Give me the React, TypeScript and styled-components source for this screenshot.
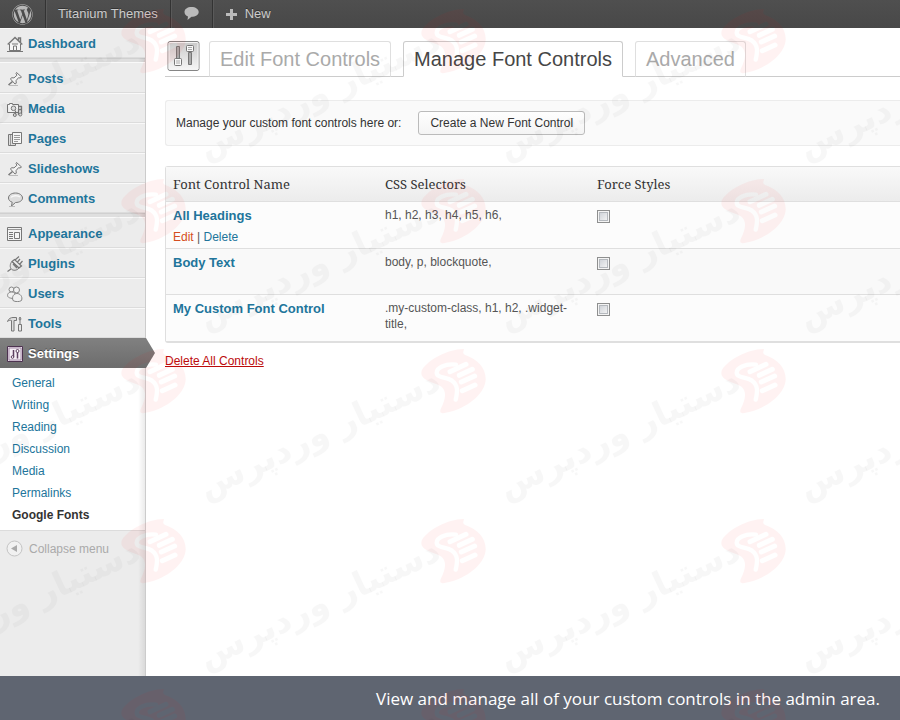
import React from "react";
import styled, { createGlobalStyle, css } from "styled-components";
import { FaWordpress } from "react-icons/fa";

const Global = createGlobalStyle`
  *, *::before, *::after { box-sizing: border-box; }
  body {
    margin: 0;
    background: #fff;
    color: #333;
    font: 12px/16px "Liberation Sans", Arial, sans-serif;
  }
  a { text-decoration: none; color: #21759b; }
`;

const Page = styled.div`
  position: relative;
  display: flex;
  flex-direction: column;
  min-height: 100vh;
  overflow: hidden;
`;

const AdminBar = styled.header`
  display: flex;
  height: 28px;
  flex: none;
  background: linear-gradient(#4f4f4f, #484848);
`;

const BarItem = styled.a<{ $last?: boolean }>`
  display: flex;
  align-items: center;
  gap: 7px;
  padding: 0 12px;
  font-size: 13px;
  color: #ccc;
  text-shadow: 0 -1px 0 #333;
  ${(p) =>
    !p.$last &&
    css`
      border-right: 1px solid #333;
      box-shadow: 1px 0 0 #5a5a5a;
    `}
`;

const Columns = styled.div`
  display: flex;
  flex: 1;
`;

const Sidebar = styled.nav`
  position: relative;
  flex: none;
  width: 146px;
  background: #ececec;
  border-right: 1px solid #ccc;
  &::after {
    content: "";
    position: absolute;
    inset: 0 0 0 auto;
    width: 7px;
    background: linear-gradient(to right, rgba(0, 0, 0, 0), rgba(0, 0, 0, 0.08));
  }
`;

const MenuGroup = styled.div`
  & + & {
    border-top: 1px solid #d0d0d0;
    padding-top: 3px;
    background: #dfdfdf;
  }
`;

const MenuItem = styled.a<{ $current?: boolean }>`
  position: relative;
  z-index: 1;
  display: flex;
  align-items: center;
  gap: 5px;
  height: 30px;
  padding: 2px 0 0 7px;
  font-size: 13px;
  font-weight: bold;
  background: #ececec;
  border-top: 1px solid #f9f9f9;
  border-bottom: 1px solid #dcdcdc;
  ${MenuGroup} + ${MenuGroup} &:first-child {
    height: 31px;
  }
  ${(p) =>
    p.$current &&
    css`
      margin-right: -1px;
      color: #fff;
      text-shadow: 0 -1px 0 #444;
      background: linear-gradient(to top, #6d6d6d, #808080);
      border-color: #808080;
      border-bottom-color: #6d6d6d;
      &::after {
        content: "";
        position: absolute;
        left: 100%;
        top: -1px;
        width: 9px;
        height: 30px;
        background: linear-gradient(to top, #6d6d6d, #808080);
        clip-path: polygon(0 0, 100% 50%, 0 100%);
      }
    `}
`;

const SubMenu = styled.ul`
  list-style: none;
  margin: 0;
  padding: 4px 0 4px;
  background: #fff;
  border-bottom: 1px solid #dcdcdc;
`;

const SubLink = styled.a<{ $current?: boolean }>`
  display: block;
  padding-left: 12px;
  line-height: 22px;
  font-weight: ${(p) => (p.$current ? "bold" : "normal")};
  color: ${(p) => (p.$current ? "#333" : "#21759b")};
`;

const Collapse = styled.button`
  display: flex;
  align-items: center;
  gap: 6px;
  width: 100%;
  height: 35px;
  padding: 0 0 0 6px;
  border: 0;
  background: none;
  font: inherit;
  color: #aaa;
`;

const Main = styled.main`
  flex: 1;
  min-width: 0;
  padding: 12px 0 24px 19px;
`;

const Tabs = styled.div`
  display: flex;
  align-items: flex-end;
  gap: 12px;
  height: 37px;
  border-bottom: 1px solid #ccc;
`;

const ScreenIcon = styled.svg`
  flex: none;
  align-self: flex-start;
  margin: 0 -3px 0 2px;
`;

const Tab = styled.a<{ $active?: boolean }>`
  margin-bottom: -1px;
  height: 36px;
  padding: 0 10px;
  border: 1px solid ${(p) => (p.$active ? "#ccc" : "#dfdfdf")};
  border-bottom-color: ${(p) => (p.$active ? "#fff" : "#ccc")};
  border-radius: 3px 3px 0 0;
  background: #fff;
  color: ${(p) => (p.$active ? "#464646" : "#aaa")};
  font-size: 20px;
  line-height: 34px;
  white-space: nowrap;
`;

const Notice = styled.section`
  display: flex;
  align-items: center;
  gap: 17px;
  height: 46px;
  margin: 23px 0 20px;
  padding-left: 10px;
  border: 1px solid #ececec;
  border-right: 0;
  border-radius: 3px 0 0 3px;
  background: #fafafa;
`;

const Button = styled.button`
  height: 24px;
  padding: 0 11px;
  border: 1px solid #bbb;
  border-radius: 3px;
  background: linear-gradient(#fefefe, #f4f4f4);
  font: inherit;
  color: #333;
`;

const Table = styled.table`
  width: 100%;
  table-layout: fixed;
  border-collapse: separate;
  border-spacing: 0;
  border: 1px solid #dfdfdf;
  border-right: 0;
  border-bottom-width: 2px;
  border-radius: 3px 0 0 3px;
`;

const Head = styled.th`
  height: 35px;
  padding: 0 7px;
  background: linear-gradient(#f9f9f9, #ececec);
  border-bottom: 1px solid #dfdfdf;
  font: 13px/18px "Noto Serif", Georgia, "Liberation Serif", serif;
  text-align: left;
  color: #333;
  &:first-child,
  &:nth-child(2) {
    width: 212px;
  }
`;

const Row = styled.tr`
  background: #fcfcfc;
  &:nth-child(even) {
    background: #f9f9f9;
  }
  &:not(:last-child) td {
    border-bottom: 1px solid #dfdfdf;
  }
`;

const Cell = styled.td`
  height: 46px;
  padding: 5px 7px 3px;
  vertical-align: top;
  color: #555;
`;

const RowTitle = styled.a`
  display: block;
  font-size: 13px;
  line-height: 17px;
  font-weight: bold;
`;

const Actions = styled.div`
  margin-top: 5px;
`;

const EditLink = styled.a`
  color: #d54e21;
`;

const Check = styled.input`
  appearance: none;
  display: block;
  width: 13px;
  height: 13px;
  margin: 3px 0 0;
  border: 1px solid #8e8f8f;
  background: linear-gradient(135deg, #ccd0d6, #f6f6f6) content-box;
  padding: 1px;
  box-shadow: inset 0 0 0 1px #f4f4f4, inset 0 0 0 2px #b5b9be;
`;

const DeleteAll = styled.a`
  display: inline-block;
  margin-top: 10px;
  color: #bc0b0b;
  text-decoration: underline;
`;

const Caption = styled.footer`
  flex: none;
  height: 44px;
  padding-right: 20px;
  background: #5f6571;
  color: #fff;
  font: 17px/46px "Open Sans", "Noto Sans", sans-serif;
  text-align: right;
  white-space: nowrap;
`;

const Overlay = styled.svg`
  position: absolute;
  inset: 0;
  z-index: 5;
  width: 100%;
  height: 100%;
  pointer-events: none;
`;

const line = { fill: "none", stroke: "#777", strokeWidth: 1 } as const;

const glyphs: Record<string, React.ReactNode> = {
  Dashboard: (
    <g {...line}>
      <path d="M2.5 8v6.5h11V8" fill="#f6f6f6" />
      <path d="M.7 8.5 8 1.5l7.3 7M11.500 4.500V2h2v4.500" strokeWidth="1.4" />
      <path d="M6.500 14.500V10h3v4.500M5 8h6M0 15.500h16" />
    </g>
  ),
  Posts: (
    <g {...line}>
      <path d="m9.500 1.500 5 4.500-1.500 1-1.500-.3-2.500 3 .3 2.500-1.300.8L3.500 8l1-1.300 2.500.2 3-2.700-1-1.500z" fill="#f4f4f4" />
      <path d="M5.500 10.500 1.500 14" strokeWidth="1.500" />
      <path d="M2 14.500h9" stroke="#bbb" />
    </g>
  ),
  Media: (
    <g {...line}>
      <path d="M.5 3.500h2v-1h3v1h6v8H.5z" fill="#f4f4f4" />
      <circle cx="6.500" cy="7.300" r="2.300" fill="#ddd" />
      <path d="M8.500 14V9.500M14.500 13V5.500h-2.500M11.500 14V8.500h3" strokeWidth="1.300" />
      <circle cx="7.800" cy="14" r="1.500" fill="#ddd" />
      <circle cx="13.300" cy="13.500" r="1.500" fill="#ddd" />
    </g>
  ),
  Pages: (
    <g {...line}>
      <path d="M5 3.500H1.500v11h7V13" fill="#ddd" />
      <path d="M5.500 1.500h9v11h-9z" fill="#f6f6f6" />
      <path d="M7 4.500h6M7 6.500h6M7 8.500h6M7 10.500h4M3.500 4v10" stroke="#999" />
    </g>
  ),
  Comments: (
    <g {...line}>
      <path d="M8.500 2C4.500 2 1.500 4 1.500 7c0 2 1.500 3.500 3.700 4.200L4.500 15l4-3.500c4 0 7-1.800 7-4.500S12.500 2 8.500 2z" fill="#dedede" />
      <path d="M4 6.500c1-2 7-2.500 9-.5" stroke="#f8f8f8" strokeWidth="1.500" />
      <path d="M2 15.500h6" stroke="#bbb" />
    </g>
  ),
  Appearance: (
    <g {...line}>
      <path d="M.500 1.500h14v13H.5z" fill="#f4f4f4" />
      <path d="M1 3.500h13" stroke="#999" />
      <path d="M2 6.500h4M2 8.500h4M2 10.500h4M2 12.500h4M7.500 6.500h5v6h-5z" />
    </g>
  ),
  Plugins: (
    <g {...line}>
      <path d="M5 5.500 12 12c-2 2.500-5.500 3-7.500 1.200S3 7.500 5 5.500z" fill="#e4e4e4" />
      <path d="m5 5.500 2.500-2 7 6.500L12 12zM8 4l4-3.500M12.500 8.500l3-3.500M10.500 6l2.500-3M4 13l-3.500 2.500M6 8l4 4" strokeWidth="1.200" />
    </g>
  ),
  Users: (
    <g stroke="#858585" fill="#f0f0f0">
      <circle cx="4.500" cy="3.500" r="2.500" />
      <path d="M.8 10.500c-1-3 1.500-4.500 4-4.500s4 1.500 4 4.500-7 2-8 0z" />
      <circle cx="9.500" cy="4" r="3" />
      <path d="M6 14.500c-1.500-4 1-7 4-7s6 3 4.500 7c-2 1.500-6.500 1.500-8.500 0z" />
    </g>
  ),
  Tools: (
    <g {...line}>
      <path d="M.500 5.500C1.500 2.500 4 1.500 6 1.500h3.500v3H7V15H4.500V4.500C3 4 1.500 4.500.5 5.500z" fill="#ddd" />
      <path d="M11.500 8.500h3V15h-3zM13 8V4.500L12 3l1-2 1 2-1 1.500" fill="#e8e8e8" />
    </g>
  ),
  Settings: (
    <g>
      <path d="M.500.500h15v15H.5z" fill="#e9dcea" stroke="#4d3350" />
      <path d="M2 2h12v12H2z" fill="#f6eff6" stroke="#a58ca8" />
      <path d="M6.500 4v7M10.500 6v6.500" stroke="#5c3f5f" strokeWidth="1.500" />
      <circle cx="5.500" cy="11" r="1.300" fill="#fff" stroke="#5c3f5f" />
      <circle cx="10.500" cy="5" r="1.500" fill="#fff" stroke="#5c3f5f" />
    </g>
  ),
};
glyphs.Slideshows = glyphs.Posts;

const MenuIcon = ({ name }: { name: string }) => (
  <svg width="16" height="16" viewBox="0 0 16 16" aria-hidden="true">
    {glyphs[name]}
  </svg>
);

const groups = [
  ["Dashboard"],
  ["Posts", "Media", "Pages", "Slideshows", "Comments"],
  ["Appearance", "Plugins", "Users", "Tools", "Settings"],
];
const subLinks = ["General", "Writing", "Reading", "Discussion", "Media", "Permalinks", "Google Fonts"];
const tabs = ["Edit Font Controls", "Manage Font Controls", "Advanced"];
const controls = [
  { name: "All Headings", selectors: "h1, h2, h3, h4, h5, h6,", actions: true },
  { name: "Body Text", selectors: "body, p, blockquote,", actions: false },
  { name: "My Custom Font Control", selectors: ".my-custom-class, h1, h2, .widget-title,", actions: false },
];

const Watermark = () => (
  <Overlay aria-hidden="true">
    <defs>
      <mask id="hand" maskUnits="userSpaceOnUse" x="0" y="0" width="900" height="510">
        <rect width="900" height="510" fill="#fff" />
        <g fill="none" stroke="#000" strokeLinecap="round">
          <path d="M768 74c-34-4-58 10-58 24 0 16 28 12 46 24 20 14 16 36 11 57" strokeWidth="13" />
          <path d="M750 95l48-22M778 106l39-18M784 126l40-18M787 152l38-17" strokeWidth="15" />
        </g>
      </mask>
      <pattern id="mark" x="200" width="300" height="170" patternUnits="userSpaceOnUse">
        <g transform="scale(.33333)">
          <path
            mask="url(#hand)"
            fill="#f00"
            fillOpacity=".05"
            d="M792 27C740 28 684 60 666 90c-10 26 22 34 48 44 34 14 20 50 8 74-5 14 4 14 34 6 54-16 100-56 101-96 0-36-26-60-60-72-12-6-6-12-5-19z"
          />
        </g>
        <text
          x="124"
          y="104"
          transform="rotate(-25 124 104)"
          textAnchor="middle"
          direction="rtl"
          fontFamily="DejaVu Sans, sans-serif"
          fontSize="34"
          fontWeight="bold"
          fill="#000"
          fillOpacity=".03"
        >
          دستیار وردپرس
        </text>
      </pattern>
    </defs>
    <rect width="100%" height="100%" fill="url(#mark)" />
  </Overlay>
);

export default function App() {
  return (
    <Page>
      <Global />
      <AdminBar>
        <BarItem href="#about" aria-label="About WordPress">
          <FaWordpress size={21} color="#b8b8b8" />
        </BarItem>
        <BarItem href="#site">Titanium Themes</BarItem>
        <BarItem href="#comments" aria-label="Comments">
          <svg width="17" height="16" viewBox="0 0 17 16">
            <path d="M8.500 1C4.500 1 1.500 3 1.500 6c0 2 1.300 3.600 3.500 4.400L4.500 14l4-3.200c4 0 7.200-1.900 7.200-4.800S12.500 1 8.500 1z" fill="#bbb" />
          </svg>
        </BarItem>
        <BarItem href="#new" $last>
          <svg width="13" height="13" viewBox="0 0 13 13" aria-hidden="true">
            <path d="M5 1h3v4h4v3H8v4H5V8H1V5h4z" fill="#bbb" />
          </svg>
          New
        </BarItem>
      </AdminBar>
      <Columns>
        <Sidebar>
          {groups.map((items) => (
            <MenuGroup key={items[0]}>
              {items.map((name) => (
                <MenuItem key={name} href={`#${name}`} $current={name === "Settings"}>
                  <MenuIcon name={name} />
                  {name}
                </MenuItem>
              ))}
            </MenuGroup>
          ))}
          <SubMenu>
            {subLinks.map((name) => (
              <li key={name}>
                <SubLink href={`#${name}`} $current={name === "Google Fonts"}>
                  {name}
                </SubLink>
              </li>
            ))}
          </SubMenu>
          <Collapse>
            <svg width="17" height="17" viewBox="0 0 17 17" aria-hidden="true">
              <circle cx="8.500" cy="8.500" r="7.500" fill="#f1f1f1" stroke="#c4c4c4" />
              <path d="M11 5v7L5 8.500z" fill="#aaa" />
            </svg>
            Collapse menu
          </Collapse>
        </Sidebar>
        <Main>
          <Tabs>
            <ScreenIcon width="33" height="32" viewBox="0 0 33 32" aria-hidden="true">
              <defs>
                <linearGradient id="plate" x2="0" y2="1">
                  <stop stopColor="#c9c9c9" />
                  <stop offset="1" stopColor="#f7f7f7" />
                </linearGradient>
              </defs>
              <rect x="1" y="1.500" width="31" height="29" rx="2" fill="url(#plate)" stroke="#858585" />
              <rect x="2" y="2.500" width="29" height="27" rx="1" fill="none" stroke="#f4f4f4" />
              <g stroke="#777" fill="#aaa">
                <path d="M9.500 6.500h3v13h-3zM21.500 12.500h3v12h-3z" />
                <rect x="7.500" y="18.500" width="7" height="7" rx="1" fill="#f8f8f8" />
                <rect x="19.500" y="5.500" width="7" height="6" rx="1" fill="#f8f8f8" />
                <path d="M9 21h4M9 23h4M21 7.500h4M21 9.500h4" stroke="#aaa" />
              </g>
            </ScreenIcon>
            {tabs.map((name) => (
              <Tab key={name} href={`#${name}`} $active={name === "Manage Font Controls"}>
                {name}
              </Tab>
            ))}
          </Tabs>
          <Notice>
            <span>Manage your custom font controls here or:</span>
            <Button>Create a New Font Control</Button>
          </Notice>
          <Table>
            <thead>
              <tr>
                <Head>Font Control Name</Head>
                <Head>CSS Selectors</Head>
                <Head>Force Styles</Head>
              </tr>
            </thead>
            <tbody>
              {controls.map((control) => (
                <Row key={control.name}>
                  <Cell>
                    <RowTitle href="#edit">{control.name}</RowTitle>
                    {control.actions && (
                      <Actions>
                        <EditLink href="#edit">Edit</EditLink> | <a href="#delete">Delete</a>
                      </Actions>
                    )}
                  </Cell>
                  <Cell>{control.selectors}</Cell>
                  <Cell>
                    <Check type="checkbox" aria-label={`Force styles for ${control.name}`} />
                  </Cell>
                </Row>
              ))}
            </tbody>
          </Table>
          <DeleteAll href="#delete-all">Delete All Controls</DeleteAll>
        </Main>
      </Columns>
      <Caption>View and manage all of your custom controls in the admin area.</Caption>
      <Watermark />
    </Page>
  );
}
